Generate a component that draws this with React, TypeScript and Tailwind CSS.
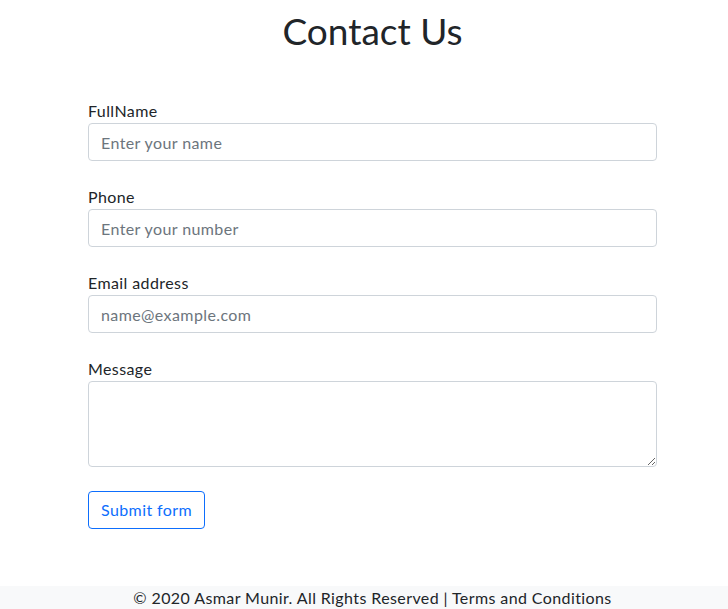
export default function App() {
  return (
    <div
      className="min-h-[609px] bg-white text-[#212529] flex flex-col tracking-[0.4px]"
      style={{ fontFamily: "Lato, 'Noto Sans', sans-serif" }}
    >
      <div className="ml-[88px] w-[569px] pt-[7px]">
        <h1 className="text-center text-[37px] leading-[48px] font-normal tracking-normal">Contact Us</h1>

        <form className="mt-[44px] flex flex-col gap-6">
          <div>
            <label className="block text-base leading-6">FullName</label>
            <input
              type="text"
              placeholder="Enter your name"
              className="block w-full h-[38px] rounded border border-[#ced4da] px-3 text-base tracking-[0.4px] placeholder:text-[#6c757d] outline-none"
            />
          </div>
          <div>
            <label className="block text-base leading-6">Phone</label>
            <input
              type="text"
              placeholder="Enter your number"
              className="block w-full h-[38px] rounded border border-[#ced4da] px-3 text-base tracking-[0.4px] placeholder:text-[#6c757d] outline-none"
            />
          </div>
          <div>
            <label className="block text-base leading-6">Email address</label>
            <input
              type="email"
              placeholder="name@example.com"
              className="block w-full h-[38px] rounded border border-[#ced4da] px-3 text-base tracking-[0.4px] placeholder:text-[#6c757d] outline-none"
            />
          </div>
          <div>
            <label className="block text-base leading-6">Message</label>
            <textarea className="block w-full h-[86px] rounded border border-[#ced4da] px-3 py-1.5 text-base outline-none" />
          </div>
          <div>
            <button
              type="button"
              className="h-[38px] px-3 rounded border border-[#0d6efd] text-[#0d6efd] text-base tracking-[0.4px] bg-white"
            >
              Submit form
            </button>
          </div>
        </form>
      </div>

      <footer className="mt-[57px] bg-[#f8f9fa] pl-[17px] text-center text-base leading-6">
        © 2020 Asmar Munir. All Rights Reserved | Terms and Conditions
      </footer>
    </div>
  );
}
